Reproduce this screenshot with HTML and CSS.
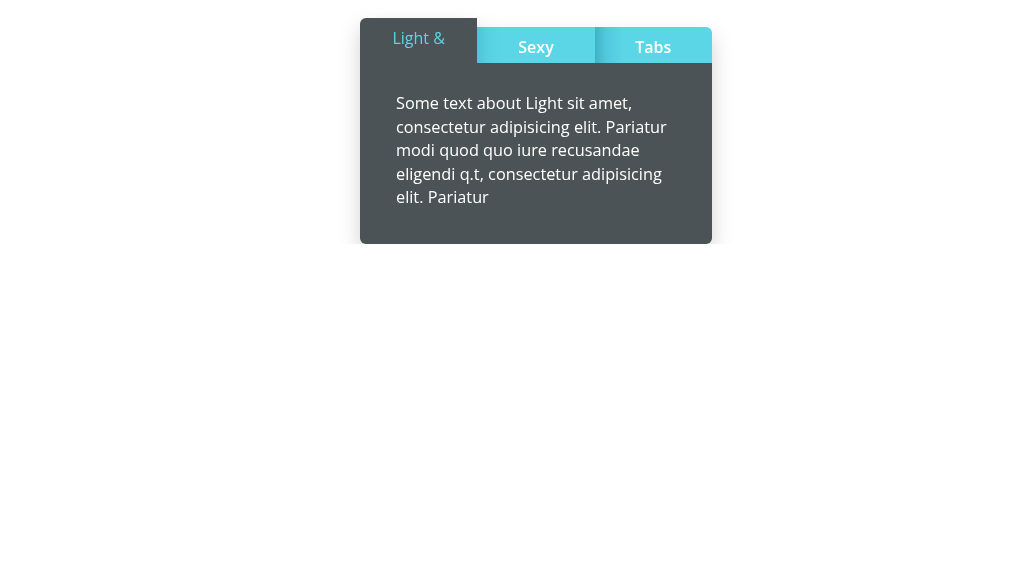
FILE: index.html
```html
<!DOCTYPE html>
<html>
<head>
<meta charset="utf-8">
<link rel="stylesheet" href="styles.css">
</head>
<body>
<div class="tabs">
  <div class="tab-row">
    <div class="tab active">Light &amp;</div>
    <div class="tab">Sexy</div>
    <div class="tab last">Tabs</div>
  </div>
  <div class="panel">
    <p>Some text about Light sit amet, consectetur adipisicing elit. Pariatur modi quod quo iure recusandae eligendi q.t, consectetur adipisicing elit. Pariatur</p>
  </div>
</div>
</body>
</html>
```

FILE: styles.css
```css
html, body {
  margin: 0;
  padding: 0;
  background: #ffffff;
}
body {
  font-family: "Open Sans", "Noto Sans", sans-serif;
  padding-top: 18px;
}
.tabs {
  width: 352px;
  margin-left: 360px;
  filter: drop-shadow(0 10px 10px rgba(0, 0, 0, 0.18));
}
.tab-row {
  display: flex;
  align-items: flex-end;
  height: 45px;
}
.tab {
  flex: 1;
  height: 36px;
  box-sizing: border-box;
  background: linear-gradient(to right, #3fb3c6 0px, #52cade 12px, #5ad6e6 28px);
  color: #ffffff;
  font-size: 16px;
  font-weight: 600;
  text-align: center;
  padding-top: 9px;
}
.tab.last {
  border-top-right-radius: 6px;
}
.tab.active {
  height: 45px;
  background: #4b5356;
  color: #5ad6e6;
  font-weight: 400;
  border-top-left-radius: 6px;
  padding-top: 9px;
}
.tab.active + .tab {
  background: linear-gradient(to right, #4cc4d6 0px, #56d1e2 10px, #5ad6e6 24px);
}
.panel {
  background: #4b5356;
  height: 181px;
  box-sizing: border-box;
  padding: 29px 36px 0 36px;
  border-radius: 0 0 6px 6px;
}
.panel p {
  margin: 0;
  color: #ffffff;
  font-size: 16.3px;
  line-height: 23.5px;
}
```
